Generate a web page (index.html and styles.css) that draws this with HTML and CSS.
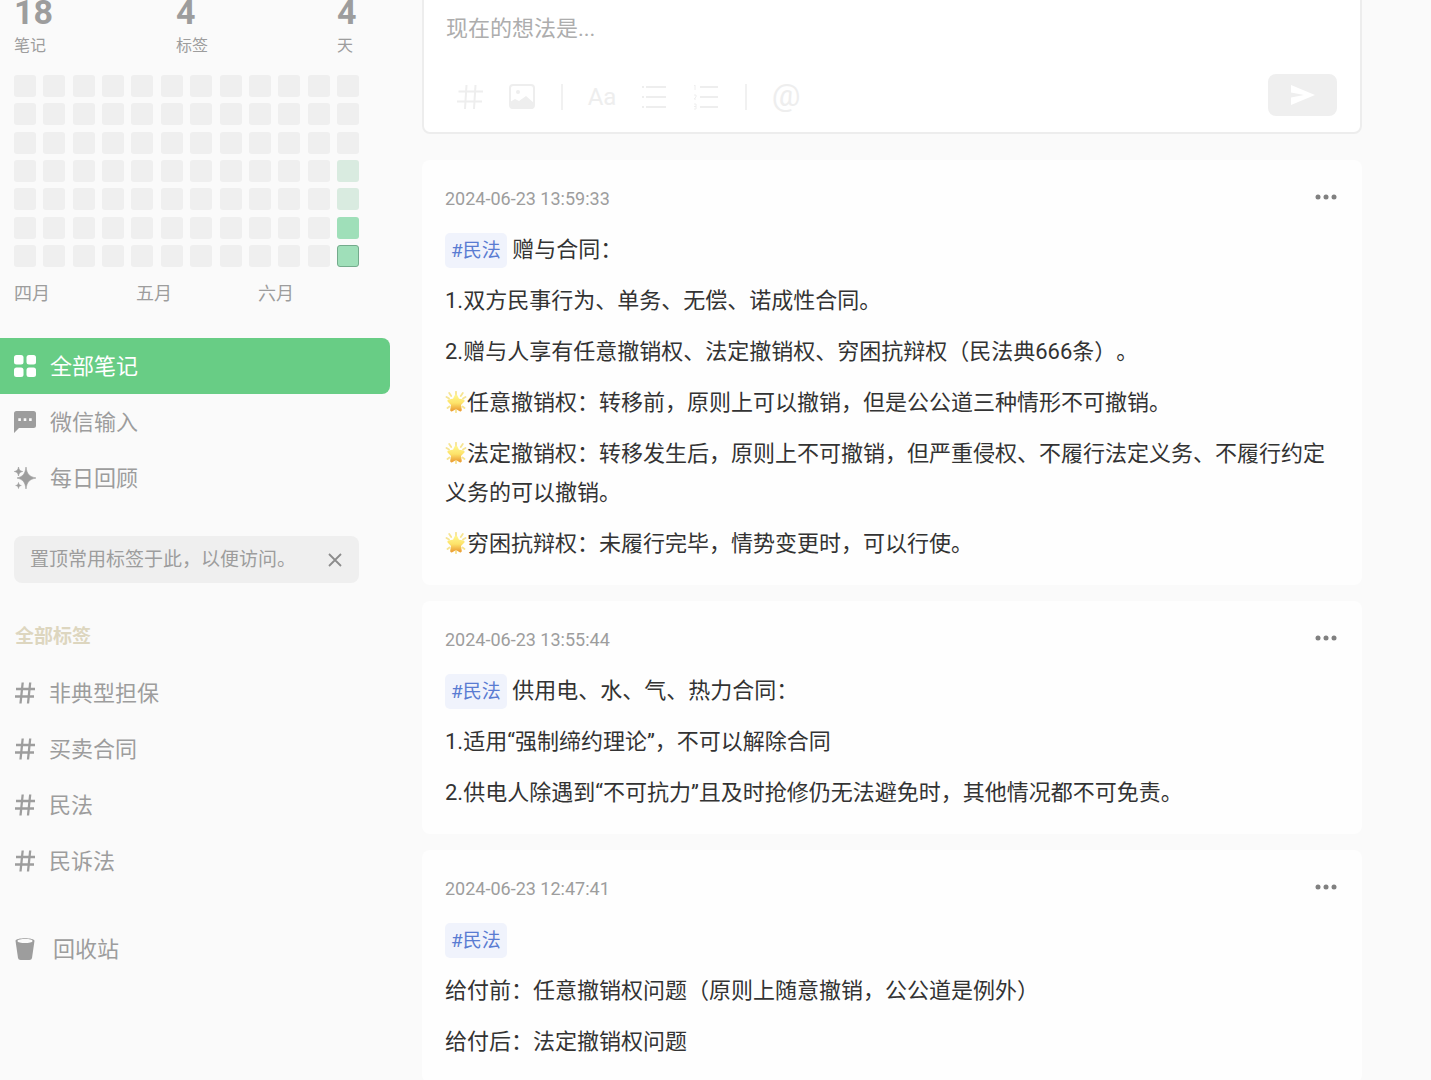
FILE: index.html
```html
<!DOCTYPE html>
<html lang="zh-CN">
<head>
<meta charset="utf-8">
<meta name="viewport" content="width=device-width, initial-scale=1">
<title>全部笔记</title>
<link rel="stylesheet" href="styles.css">
</head>
<body>
<svg class="sprite" aria-hidden="true">
  <defs>
    <linearGradient id="star-fill" x1="0" y1="0" x2="0" y2="1">
      <stop offset="0" stop-color="#fff48a"/><stop offset=".5" stop-color="#fde36a"/><stop offset="1" stop-color="#eda338"/>
    </linearGradient>
  </defs>
  <symbol id="hash" viewBox="0 0 22 22"><path d="M8.700 .5 6.500 21.500M16.200 .5l-2.200 21M2 7h19M1 14.500h19" fill="none" stroke="currentColor" stroke-width="2.300"/></symbol>
  <symbol id="star" viewBox="0 0 22 22">
    <path d="M11 .8v3M4.200 2l2 3M17.800 2l-2 3M1.500 6l2.500 1.500M20.500 6l-2.500 1.500M2.500 17l2-1.500M19.500 17l-2-1.500M11 19v2.300" stroke="#f6e491" stroke-width="1.800" stroke-linecap="round"/>
    <path d="m11 5 2 4 5.200.8-3.700 3.700.9 5.500-4.400-2.400-4.400 2.400.9-5.500-3.700-3.700L9 9z" fill="url(#star-fill)" stroke="url(#star-fill)" stroke-width="2.800" stroke-linejoin="round"/>
  </symbol>
  <symbol id="dots" viewBox="0 0 22 22"><circle cx="3" cy="10" r="2.500"/><circle cx="11" cy="10" r="2.500"/><circle cx="19" cy="10" r="2.500"/></symbol>
</svg>

<div class="page">
  <aside class="sidebar">
    <div class="stats">
      <div><strong>18</strong><span>笔记</span></div>
      <div><strong>4</strong><span>标签</span></div>
      <div><strong>4</strong><span>天</span></div>
    </div>

    <div class="heatmap">
      <i></i><i></i><i></i><i></i><i></i><i></i><i></i>
      <i></i><i></i><i></i><i></i><i></i><i></i><i></i>
      <i></i><i></i><i></i><i></i><i></i><i></i><i></i>
      <i></i><i></i><i></i><i></i><i></i><i></i><i></i>
      <i></i><i></i><i></i><i></i><i></i><i></i><i></i>
      <i></i><i></i><i></i><i></i><i></i><i></i><i></i>
      <i></i><i></i><i></i><i></i><i></i><i></i><i></i>
      <i></i><i></i><i></i><i></i><i></i><i></i><i></i>
      <i></i><i></i><i></i><i></i><i></i><i></i><i></i>
      <i></i><i></i><i></i><i></i><i></i><i></i><i></i>
      <i></i><i></i><i></i><i></i><i></i><i></i><i></i>
      <i></i><i></i><i></i><i class="low"></i><i class="low"></i><i class="high"></i><i class="high today"></i>
    </div>
    <div class="months"><span>四月</span><span>五月</span><span>六月</span></div>

    <nav class="nav">
      <a class="item active" href="#all">
        <svg viewBox="0 0 22 22"><rect width="9.500" height="9.500" rx="2.500"/><rect x="12.500" width="9.500" height="9.500" rx="2.500"/><rect y="12.500" width="9.500" height="9.500" rx="2.500"/><rect x="12.500" y="12.500" width="9.500" height="9.500" rx="2.500"/></svg>
        全部笔记
      </a>
      <a class="item" href="#wechat">
        <svg viewBox="0 0 22 22"><path fill-rule="evenodd" d="M2.500 0h17A2.500 2.500 0 0 1 22 2.500v12a2.500 2.500 0 0 1-2.500 2.500H5l-5 5V2.500A2.500 2.500 0 0 1 2.500 0zM4.300 7.300v2.600h2.600V7.300zm5.400 0v2.600h2.600V7.300zm5.400 0v2.600h2.600V7.300z"/></svg>
        微信输入
      </a>
      <a class="item" href="#review">
        <svg viewBox="0 0 22 22"><path d="M12 0c1 7 3 9.500 10 11-7 1.500-9 4-10 11-1-7-3-9.500-9-11 6-1.500 8-4 9-11zM4.500 0c.5 3 1.500 4 4.200 4.500C6 5 5 6 4.500 9 4 6 3 5 .3 4.500 3 4 4 3 4.500 0zM4.500 15.500c.4 2 1 2.700 2.800 3-1.800.3-2.400 1-2.800 3-.4-2-1-2.700-2.800-3 1.800-.3 2.400-1 2.800-3z" stroke="currentColor" stroke-width=".6"/></svg>
        每日回顾
      </a>
    </nav>

    <div class="notice">
      <span>置顶常用标签于此，以便访问。</span>
      <button type="button" aria-label="关闭"><svg viewBox="0 0 16 16"><path d="m2 2 12 12M14 2 2 14" fill="none" stroke="currentColor" stroke-width="1.800"/></svg></button>
    </div>

    <h2 class="tags-title">全部标签</h2>
    <nav class="nav tags">
      <a class="item" href="#t1"><svg><use href="#hash"/></svg>非典型担保</a>
      <a class="item" href="#t2"><svg><use href="#hash"/></svg>买卖合同</a>
      <a class="item" href="#t3"><svg><use href="#hash"/></svg>民法</a>
      <a class="item" href="#t4"><svg><use href="#hash"/></svg>民诉法</a>
    </nav>
    <a class="item trash" href="#trash">
      <svg viewBox="0 0 22 22"><path fill-rule="evenodd" d="M1.500 2.800C1.500-.6 20.500-.6 20.500 2.800L18 20q-.3 2-2.500 2h-9Q4.300 22 4 20zM3.500 3c0 2.700 15 2.700 15 0s-15-2.300-15 0z"/></svg>
      回收站
    </a>
  </aside>

  <main class="main">
    <form class="editor">
      <textarea aria-label="新笔记" placeholder="现在的想法是..."></textarea>
      <div class="toolbar">
        <button type="button" aria-label="标签"><svg viewBox="0 0 26 26"><path d="M9.500 1 8 25M18.500 1 17 25M1.500 7.500H26M0 17.500h25" fill="none" stroke="currentColor" stroke-width="2"/></svg></button>
        <button type="button" aria-label="图片"><svg viewBox="0 0 26 26"><rect x="1" y="1" width="24" height="23" rx="3" fill="none" stroke="currentColor" stroke-width="2"/><circle cx="9" cy="8" r="2"/><path d="m1 18 5-3 4 2 7-5 8 7v3q0 3-3 3H4q-3 0-3-3z"/></svg></button>
        <span class="divider"></span>
        <button type="button">Aa</button>
        <button type="button" aria-label="无序列表"><svg viewBox="0 0 26 26"><path d="M5 3h20M5 13h20M5 23h20M1 3h2M1 13h2M1 23h2" stroke="currentColor" stroke-width="2"/></svg></button>
        <button type="button" aria-label="有序列表"><svg viewBox="0 0 26 26"><path d="M7 3h18M7 13h18M7 23h18" stroke="currentColor" stroke-width="2"/><path d="M1 2l1-1v5M1 11h2v2l-2 2h2M1 20h2v5H1m0-2.500h2" fill="none" stroke="currentColor"/></svg></button>
        <span class="divider"></span>
        <button type="button" class="at">@</button>
        <button type="submit" class="send" aria-label="发送"><svg viewBox="0 0 24 20"><path d="M0 0 24 10 0 20V12.500L13 10 0 7.500z"/></svg></button>
      </div>
    </form>

    <article class="card">
      <header><time>2024-06-23 13:59:33</time><button type="button" aria-label="更多"><svg><use href="#dots"/></svg></button></header>
      <p><a class="tag" href="#t3">#民法</a> 赠与合同：</p>
      <p>1.双方民事行为、单务、无偿、诺成性合同。</p>
      <p>2.赠与人享有任意撤销权、法定撤销权、穷困抗辩权（民法典666条）。</p>
      <p><svg class="star"><use href="#star"/></svg>任意撤销权：转移前，原则上可以撤销，但是公公道三种情形不可撤销。</p>
      <p><svg class="star"><use href="#star"/></svg>法定撤销权：转移发生后，原则上不可撤销，但严重侵权、不履行法定义务、不履行约定义务的可以撤销。</p>
      <p><svg class="star"><use href="#star"/></svg>穷困抗辩权：未履行完毕，情势变更时，可以行使。</p>
    </article>

    <article class="card">
      <header><time>2024-06-23 13:55:44</time><button type="button" aria-label="更多"><svg><use href="#dots"/></svg></button></header>
      <p><a class="tag" href="#t3">#民法</a> 供用电、水、气、热力合同：</p>
      <p>1.适用“强制缔约理论”，不可以解除合同</p>
      <p>2.供电人除遇到“不可抗力”且及时抢修仍无法避免时，其他情况都不可免责。</p>
    </article>

    <article class="card">
      <header><time>2024-06-23 12:47:41</time><button type="button" aria-label="更多"><svg><use href="#dots"/></svg></button></header>
      <p><a class="tag" href="#t3">#民法</a></p>
      <p>给付前：任意撤销权问题（原则上随意撤销，公公道是例外）</p>
      <p>给付后：法定撤销权问题</p>
    </article>
  </main>
</div>
</body>
</html>
```
FILE: styles.css
```css
* { box-sizing: border-box; }

body {
  margin: 0;
  background: #fafafa;
  color: #333;
  font: 22px/39px Roboto, "Noto Sans CJK SC", sans-serif;
  text-spacing-trim: space-all;
  overflow: hidden;
}

button, textarea { font: inherit; border: 0; background: none; padding: 0; }
a { color: inherit; text-decoration: none; }
svg { display: block; width: 22px; height: 22px; fill: currentColor; flex: none; }
.sprite { position: absolute; width: 0; height: 0; }

.page { display: flex; gap: 32px; margin-top: -40px; padding-right: 69px; }

/* Sidebar */
.sidebar { flex: 0 0 390px; padding-top: 32px; color: #9d9d9d; }
.stats { display: grid; grid-template-columns: 162px 161px auto; padding-left: 14px; }
.stats strong { display: block; font-size: 34px; line-height: 41px; }
.stats span { display: block; font-size: 16px; line-height: 26px; }

.heatmap {
  display: grid;
  grid-auto-flow: column;
  grid-template-rows: repeat(7, 22px);
  grid-auto-columns: 22px;
  justify-content: space-between;
  align-content: space-between;
  height: 192px;
  margin: 16px 31px 0 14px;
}
.heatmap i { background: #efefef; border-radius: 3px; }
.heatmap .low { background: #d9ebe0; }
.heatmap .high { background: #9fdfb9; }
.heatmap .today { border: 1px solid #74ab8c; }

.months {
  display: grid;
  grid-template-columns: repeat(3, 122px);
  margin: 15px 0 32px;
  padding-left: 14px;
  font-size: 18px;
  line-height: 24px;
}

.item { display: flex; align-items: center; gap: 14px; height: 56px; padding-left: 14px; }
.item.active { background: #68cd85; color: #fff; border-radius: 0 8px 8px 0; }
.tags .item { gap: 13px; }
.item.trash { gap: 17px; margin-top: 32px; }

.notice {
  display: flex;
  align-items: center;
  justify-content: space-between;
  height: 47px;
  margin: 30px 31px 42px 14px;
  padding: 0 16px;
  border-radius: 8px;
  background: #efefef;
  font-size: 19px;
}
.notice button { color: #8c8c8c; }
.notice svg { width: 16px; height: 16px; }

.tags-title { margin: 0 0 16px; padding-left: 15px; color: #ddd6bf; font-size: 19px; line-height: 24px; }

/* Main column */
.main { flex: 1; min-width: 0; display: flex; flex-direction: column; gap: 16px; }

.editor {
  margin-bottom: 10px;
  padding: 47px 23px 16px 20px;
  border: 2px solid #ededed;
  border-radius: 8px;
  background: #fff;
}
.editor textarea {
  display: block;
  width: 100%;
  height: 65px;
  padding-left: 2px;
  line-height: 40px;
  resize: none;
  outline: 0;
}
.editor textarea::placeholder { color: #adadad; }

.toolbar { display: flex; align-items: center; height: 42px; color: #eee; }
.toolbar button { display: grid; place-items: center; width: 52px; height: 42px; padding-top: 4px; color: inherit; font-size: 24px; }
.toolbar svg { width: 26px; height: 26px; }
.toolbar .at { font-size: 32px; line-height: 32px; padding: 0; }
.divider { width: 2px; height: 26px; margin: 4px 13px 0; background: #f1f1f1; }
.toolbar .send { width: 69px; margin-left: auto; padding: 0; border-radius: 8px; background: #efefef; color: #fff; }
.toolbar .send svg { width: 24px; height: 20px; }

.card { padding: 24px 25px 22px 23px; border-radius: 8px; background: #fefefe; }
.card header { display: flex; align-items: center; justify-content: space-between; height: 28px; margin-bottom: 18px; color: #9d9d9d; font-size: 18px; }
.card header button { color: #808080; }
.card p { margin: 0; }
.card p + p { margin-top: 12px; }

.tag { padding: 6px; border-radius: 5px; background: #f0f3fc; color: #5a7cd2; font-size: 19px; line-height: 24px; }
.star { display: inline-block; vertical-align: -3px; }
```
